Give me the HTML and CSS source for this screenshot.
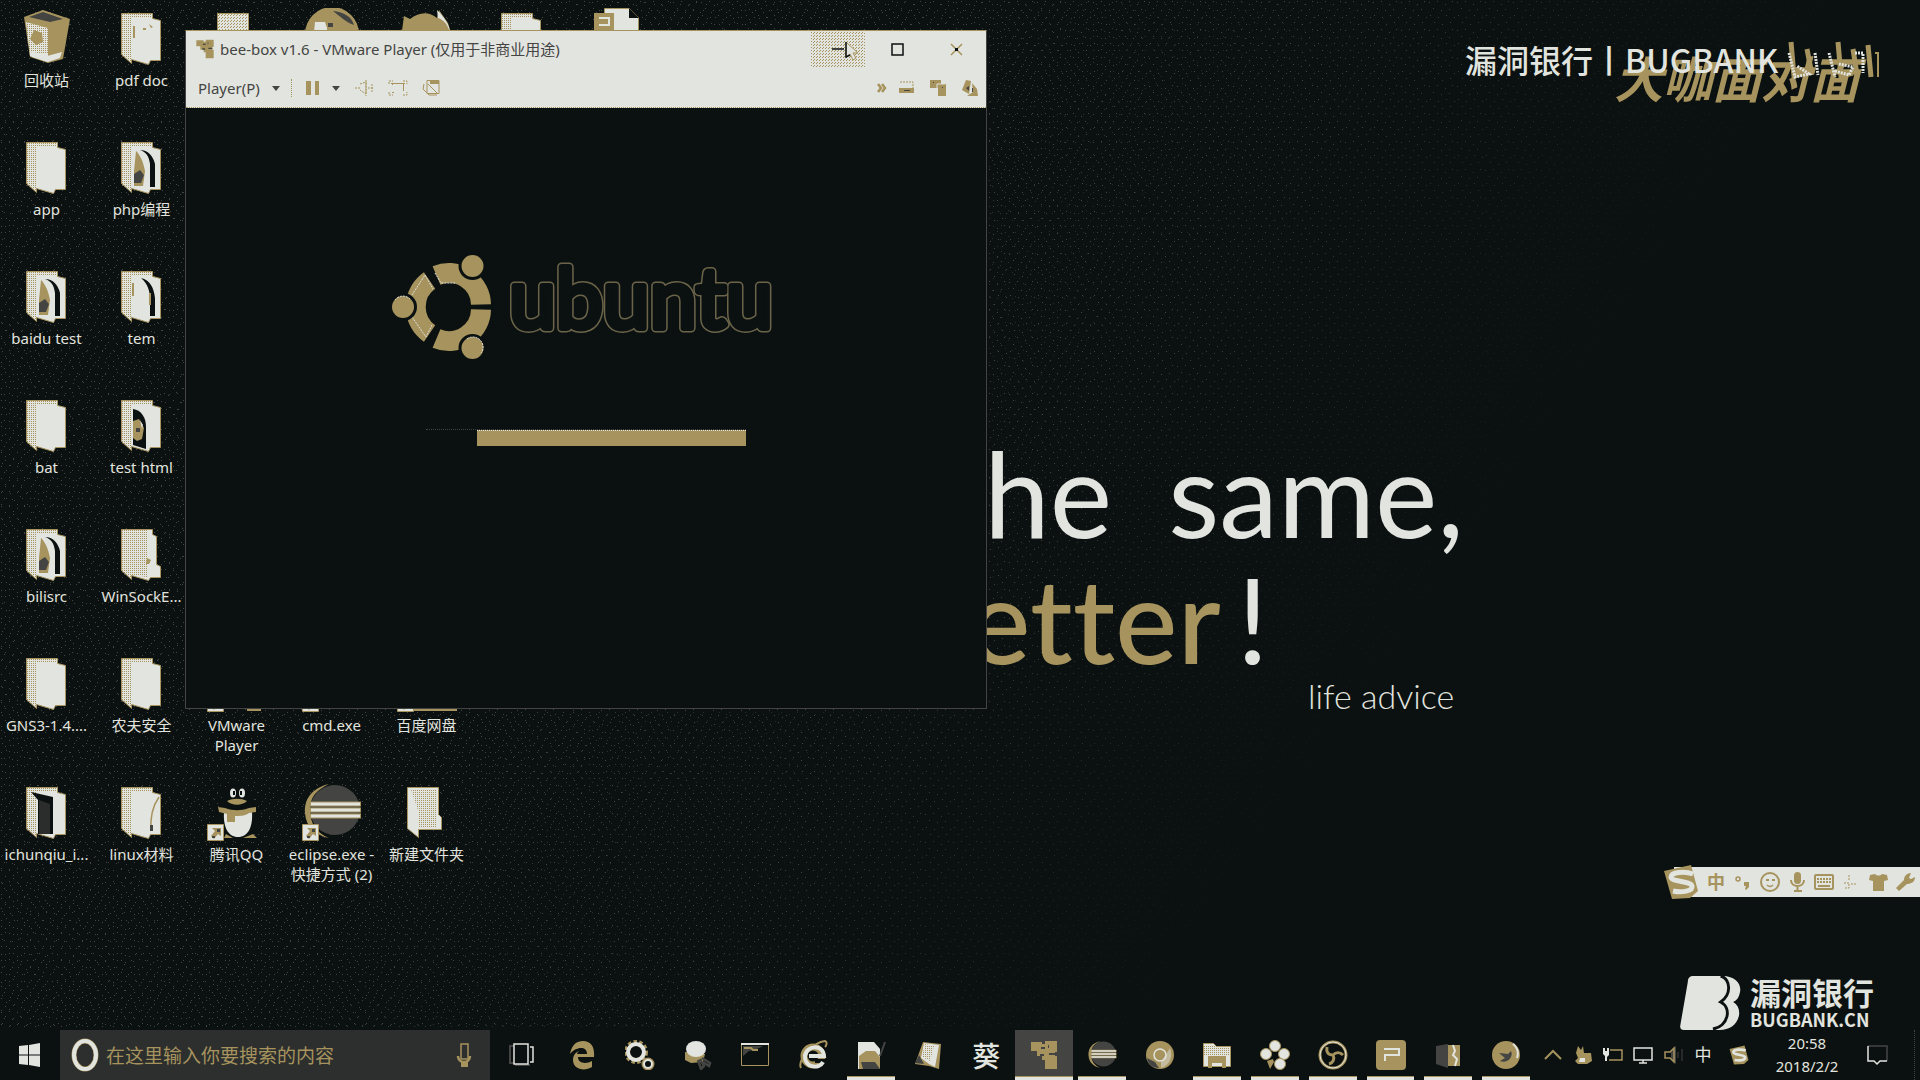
FILE: index.html
```html
<!DOCTYPE html>
<html lang="zh-CN">
<head>
<meta charset="utf-8">
<title>Desktop</title>
<link rel="stylesheet" href="styles.css">
</head>
<body>
<svg class="defs" aria-hidden="true">
  <defs>
    <pattern id="check" width="2" height="2" patternUnits="userSpaceOnUse"><path class="gold" d="M0 0h1v1H0z"/></pattern>
    <pattern id="check3" width="3" height="3" patternUnits="userSpaceOnUse"><path class="gold" d="M0 0h1v1H0zM2 1h1v1H2z"/></pattern>
    <symbol id="folder" viewBox="0 0 60 60">
      <path class="cream edge" d="M9.500 5.500h31v5l8 2v40h-10l-2 4-17-5v4l-10-9z"/>
      <path fill="url(#check)" d="M10 6h10v50l-10-8zM20 6h20v4H20z"/>
    </symbol>
    <symbol id="folder-photo" viewBox="0 0 60 60">
      <use href="#folder"/>
      <path class="ink" d="M28 13c8 0 13 6 15 14v23h-5V27c-1-8-4-12-10-14z"/>
      <path class="gold" d="M24 14c4 4 7 10 9 20l-2 15h-9V34z"/>
      <path class="gray" d="M22 37l6-4 4 5-3 8h-7z"/>
    </symbol>
    <symbol id="folder-pale" viewBox="0 0 60 60">
      <use href="#folder"/>
      <path class="ink" d="M29 12c9 2 13 10 14 20v18h-5V34c0-9-2-16-9-22z"/>
      <path class="gold" d="M20 17h2v13h-2zM37 27h2v12h-2z"/>
    </symbol>
    <symbol id="folder-dense" viewBox="0 0 60 60">
      <path class="cream edge" d="M9.500 5.500h31v5l4 2v28l4 2v11h-10l-2 3-17-5v4l-10-9z"/>
      <path fill="url(#check)" d="M10 6h25v47l-15-2v4l-10-7z"/>
      <path class="gold" d="M35 34l4 2-2 4h-3z"/>
    </symbol>
    <symbol id="arrow" viewBox="0 0 60 60">
      <path class="cream edge" d="M.5 42.500h16v16H.5z"/>
      <path class="gold" d="M5 46h9v8l-3-2-4 5-3-3 4-5z"/>
      <path class="gray" d="M10 47h3v3h-3zM5 54h3v2H5z"/>
    </symbol>
    <symbol id="sogou" viewBox="0 0 36 36">
      <path class="gold" d="M1 7L28 1l7 26-8 7-18 1z"/>
      <path class="s-cream" stroke-width="5" d="M30 10C22 7 8 8 8 13s20 4 21 9-10 7-19 5"/>
    </symbol>
    <symbol id="eclipse" viewBox="0 0 60 60">
      <circle class="gray" cx="33" cy="28" r="25"/>
      <path class="gold" d="M27 2C10 6 2 17 3 31s10 22 24 25C15 51 8 42 8 28S15 8 27 2z"/>
      <path class="s-gold" stroke-width="5" d="M8 22h51M8 28h51M8 34h51"/>
      <path class="s-cream" stroke-width="3" d="M9 22h49M9 28h49M9 34h49"/>
    </symbol>
    <symbol id="vmware" viewBox="0 0 28 30">
      <path class="gold" d="M1 2h11v2h3V1h12v11h-2v4h2v13H15v-9h-3v-4H7v-5H1z"/>
      <path class="gray" d="M11 7h4v2h-4zM10 14h4v2h-4zM19 13h6v2h-6zM18 5h1v3h-1z"/>
    </symbol>
  </defs>
</svg>

<div class="screen">
  <main class="desktop">
    <svg class="grain" width="100%" height="100%" aria-hidden="true">
      <defs>
        <pattern id="dots-a" width="28" height="28" patternUnits="userSpaceOnUse"><path class="gray" d="M1 2h1v1h-1zM9 1h1v1h-1zM17 4h1v1h-1zM24 1h1v1h-1zM5 8h1v1h-1zM13 10h1v1h-1zM21 9h1v1h-1zM2 15h1v1h-1zM10 17h1v1h-1zM18 15h1v1h-1zM26 17h1v1h-1zM6 22h1v1h-1zM14 24h1v1h-1zM22 22h1v1h-1z"/></pattern>
        <pattern id="dots-b" width="26" height="26" patternUnits="userSpaceOnUse"><path class="gray" d="M4 4h1v1h-1zM12 5h1v1h-1zM20 2h1v1h-1zM1 10h1v1h-1zM9 12h1v1h-1zM17 10h1v1h-1zM24 12h1v1h-1zM5 18h1v1h-1zM13 17h1v1h-1zM21 19h1v1h-1zM1 24h1v1h-1zM9 23h1v1h-1zM17 24h1v1h-1z"/></pattern>
        <linearGradient id="fade-far" gradientUnits="userSpaceOnUse" x1="0" y1="0" x2="1291" y2="878"><stop offset=".72" stop-color="#fff"/><stop offset="1" stop-color="#000"/></linearGradient>
        <linearGradient id="fade-near" gradientUnits="userSpaceOnUse" x1="0" y1="0" x2="1291" y2="878"><stop offset=".5" stop-color="#fff"/><stop offset=".8" stop-color="#000"/></linearGradient>
        <mask id="far"><rect width="100%" height="100%" fill="url(#fade-far)"/></mask>
        <mask id="near"><rect width="100%" height="100%" fill="url(#fade-near)"/></mask>
      </defs>
      <rect width="100%" height="100%" fill="url(#dots-a)" mask="url(#far)"/>
      <rect width="100%" height="100%" fill="url(#dots-b)" mask="url(#near)"/>
    </svg>

    <div class="wallpaper">
      <p class="line line-one"><span>he</span><span>same,</span></p>
      <p class="line line-two"><span class="accent">etter</span><span>!</span></p>
      <p class="advice">life advice</p>
    </div>

    <ul class="shortcuts">
      <li><svg viewBox="0 0 60 60"><path class="gold" d="M7 9L26 2l27 9-7 40-15 4-18-6z"/><path class="gray" d="M12 9l14-5 20 7-13 3z"/><path class="cream" d="M9 14l22 6v34l-18-6z"/><path fill="url(#check)" d="M8 13l24 6v26H12z"/><path class="gold" d="M17 22l8 3 1 9-7 3-6-6z"/><path class="cream" d="M14 43l16 5 15-4-2 6-12 4-16-5z"/></svg><span>回收站</span></li>
      <li><svg><use href="#folder"/></svg><span>app</span></li>
      <li><svg><use href="#folder-photo"/></svg><span>baidu test</span></li>
      <li><svg><use href="#folder"/></svg><span>bat</span></li>
      <li><svg><use href="#folder-photo"/></svg><span>bilisrc</span></li>
      <li><svg><use href="#folder"/></svg><span>GNS3-1.4....</span></li>
      <li><svg viewBox="0 0 60 60"><use href="#folder"/><path class="ink" d="M14 10l22 5v37H21V18z"/><path fill="#2a2d2c" d="M22 18l11 4v30H22z"/></svg><span>ichunqiu_i...</span></li>

      <li><svg viewBox="0 0 60 60"><use href="#folder"/><path class="gold" d="M21 18h2v12h-2zM31 20h3v2h-3zM37 16l4 3-2 1z"/></svg><span>pdf doc</span></li>
      <li><svg><use href="#folder-photo"/></svg><span>php编程</span></li>
      <li><svg><use href="#folder-pale"/></svg><span>tem</span></li>
      <li><svg viewBox="0 0 60 60"><use href="#folder"/><path class="ink" d="M21 14c8 1 13 8 13 18v22l-13-4z"/><path class="gold" d="M21 26l6-2 5 9-2 11-5 2-4-3z"/><path class="cream" d="M28 25l3 5-1 4z"/><path class="gray" d="M24 33h4v4h-4z"/></svg><span>test html</span></li>
      <li><svg><use href="#folder-dense"/></svg><span>WinSockE...</span></li>
      <li><svg><use href="#folder"/></svg><span>农夫安全</span></li>
      <li><svg viewBox="0 0 60 60"><use href="#folder"/><path class="s-gold" stroke-width="1.500" d="M47 15c-7 10-9 20-8 34"/><path class="gray" d="M38 43h3v6h-3z"/></svg><span>linux材料</span></li>

      <li class="r1 c3"><svg viewBox="0 0 60 60"><path class="cream edge" d="M10.500 5.500h31v50h-31z"/><path fill="url(#check3)" d="M11 6h30v40H11z"/></svg></li>
      <li class="r6 c3"><svg viewBox="0 0 60 60"><path class="gold" d="M40 30h14v28H40z"/><use href="#arrow"/></svg><span>VMware Player</span></li>
      <li class="r7 c3"><svg viewBox="0 0 60 60"><path class="ink" d="M30 0c13 0 15 11 15 19l6 13 3 15-4-1-6 8H16L6 40l9-21C15 11 17 0 30 0z"/><ellipse class="cream" cx="26" cy="11" rx="3" ry="4.500"/><ellipse class="cream" cx="35" cy="11" rx="3" ry="4.500"/><path class="ink" d="M26 9h2v4h-2zM33 9h2v4h-2z"/><path class="gold" d="M20 19c6-3 14-3 20 0-5 5-15 5-20 0z"/><path class="cream" d="M17 30h28c1 15-4 25-14 25S16 45 17 30z"/><path class="gold" d="M11 25l7 1c8 3 16 3 24 0l7-1v5l-7 1c-4 3-9 3-14 3v6h-8v-8l-8-2zM17 56l2-4 7 4zM36 56l10-4 4 4z"/><use href="#arrow"/></svg><span>腾讯QQ</span></li>

      <li class="r1 c4"><svg viewBox="0 0 60 60"><circle class="gold" cx="30" cy="26" r="27"/><path class="cream" d="M13 14h10l2 6v14H11z"/><path class="gray" d="M31 3c11 1 19 6 21 14-9-3-14-9-21-14zM26 15h5v4h-5z"/></svg></li>
      <li class="r6 c4"><svg viewBox="0 0 60 60"><use href="#arrow"/></svg><span>cmd.exe</span></li>
      <li class="r7 c4"><svg viewBox="0 0 60 60"><use href="#eclipse"/><use href="#arrow"/></svg><span>eclipse.exe - 快捷方式 (2)</span></li>

      <li class="r1 c5"><svg viewBox="0 0 60 60"><path class="gold" d="M4 30L7 8l6 3c9-7 19-8 27-1l2-8 9 13 5 16z"/><path class="cream" d="M40 2c6 6 12 13 13 22-3-8-6-12-12-14z"/></svg></li>
      <li class="r6 c5"><svg viewBox="0 0 60 60"><path class="gold" d="M14 40h46v18H14z"/><use href="#arrow"/></svg><span>百度网盘</span></li>
      <li class="r7 c5"><svg viewBox="0 0 60 60"><path class="cream edge" d="M10.500 5.500h31v27l3 3v12h-23v8l-11-9z"/><path fill="url(#check)" d="M14 8h26v38H21V28z"/></svg><span>新建文件夹</span></li>

      <li class="r1 c6"><svg><use href="#folder"/></svg></li>
      <li class="r1 c7"><svg viewBox="0 0 60 60"><path class="cream edge" d="M17.500.5h25l9 9v30h-34z"/><path class="ink" d="M42 0v10h10z"/><path class="gold" d="M7 5h20v20H7z"/><path class="s-cream" stroke-width="2" d="M12 10h10v7H12"/></svg></li>
    </ul>

    <section class="window" aria-label="VMware Player">
      <header class="chrome">
        <div class="titlebar">
          <svg class="app-icon" viewBox="0 0 28 30"><use href="#vmware"/></svg>
          <h1>bee-box v1.6 - VMware Player (仅用于非商业用途)</h1>
          <div class="controls">
            <button class="hover" aria-label="Minimize"><svg viewBox="0 0 54 36"><path fill="url(#check3)" d="M0 0h54v36H0z"/><path class="s-ink" stroke-width="1.500" d="M21 17h12"/></svg></button>
            <button aria-label="Maximize"><svg viewBox="0 0 54 36"><path class="s-ink" stroke-width="1.500" d="M22 12h11v11H22z"/></svg></button>
            <button aria-label="Close"><svg viewBox="0 0 54 36"><path class="s-gold" stroke-width="1.500" d="M22 12l11 11M33 12L22 23"/><path class="ink" d="M26 16h3v3h-3z"/></svg></button>
          </div>
        </div>
        <div class="toolbar">
          <button class="menu">Player(P)<i class="caret"></i></button>
          <i class="rule"></i>
          <button class="pause" aria-label="Suspend"><svg viewBox="0 0 14 14"><path class="gold" d="M0 0h5v14H0zM9 0h4v14H9z"/></svg><i class="caret"></i></button>
          <button aria-label="Send keys"><svg viewBox="0 0 20 18"><path class="s-gold dashed" d="M1 9h5M6 5l6-2v12l-6-4M12 1v16M14 9h5M18 5v8"/></svg></button>
          <button aria-label="Full screen"><svg viewBox="0 0 20 18"><path class="s-gold dashed" d="M1 5V2h4M15 2h4v3M1 13v3h4M15 16h4v-3"/><path class="s-gold" d="M3 4.500h14M4.500 4v2M15.500 4v8M4 13.500h2"/></svg></button>
          <button aria-label="Unity"><svg viewBox="0 0 20 18"><path class="s-gold" d="M5 1.500h12v13H5zM2 5l-1 5 6 6h8M6 5l9 9"/><path class="gold" d="M8 1h9v4H8z"/></svg></button>
          <div class="devices">
            <button class="more" aria-label="More"><svg viewBox="0 0 10 10"><path class="s-gold" stroke-width="2.500" d="M1 1l3 4-3 4M5 1l3 4-3 4"/></svg></button>
            <button aria-label="Hard disk"><svg viewBox="0 0 20 18"><path class="s-gold dashed" d="M2 3h13v7"/><path class="gold" d="M1 9h15v5H1z"/><path class="gray" d="M6 11h6v1H6z"/></svg></button>
            <button aria-label="Network"><svg viewBox="0 0 20 18"><path class="gold" d="M1 1h11v4h5v12H9V9H1z"/><path class="s-cream" d="M8 13V5h8"/><path class="gray" d="M4 3h1v1H4zM13 8h1v1h-1z"/></svg></button>
            <button aria-label="Printer"><svg viewBox="0 0 20 18"><path class="gold" d="M6 1l5 1-2 13-7-4zM12 4l5 6 1 7H7l6-4z"/><path class="gray" d="M6 9l3-2v5zM12 9h1v4h-1z"/></svg></button>
          </div>
        </div>
      </header>
      <div class="guest">
        <svg class="ubuntu" viewBox="0 0 390 112" role="img" aria-label="ubuntu">
          <g fill="none" class="ring" stroke-width="20">
            <path d="M38.600 27.600A32 32 0 0 0 38.600 80.400"/>
            <path d="M45.500 22.500A32 32 0 0 1 90 51.500"/>
            <path d="M90 56.500A32 32 0 0 1 45.500 85.500"/>
          </g>
          <path class="s-cream dashed" d="M21 42l13-20 8 14M21 64l14 20 6-12M44 20l6 10h14"/>
          <g class="gold knob"><circle cx="12" cy="54" r="12.500"/><circle cx="81.500" cy="13" r="12.500"/><circle cx="81.500" cy="95" r="12.500"/></g>
          <path class="s-cream dashed" d="M4 47a10 10 0 0 1 15-1M76 86a10 10 0 0 1 14 14"/>
          <text class="word outer" x="118" y="75">ubuntu</text>
          <text class="word inner" x="118" y="75">ubuntu</text>
        </svg>
        <div class="boot" role="progressbar" aria-label="Booting"><span></span></div>
      </div>
    </section>
    <svg class="pointer" viewBox="0 0 14 20" aria-hidden="true"><path class="cream edge" d="M1 1v15l4-3 3 6 3-2-3-5h5z"/><path class="s-ink" stroke-width="1.500" d="M1 1v15l4-2"/></svg>

    <div class="live">
      <p class="show">大咖面对面</p>
      <p class="bank">漏洞银行丨BUGBANK</p>
      <svg class="bili" viewBox="0 0 96 46" aria-hidden="true"><path class="s-gold" stroke-width="5" d="M6 3l3 34 14-4M22 10l5 26M53 3l3 34 12-3M68 10l4 26M83 6l3 32"/><path class="s-gold" stroke-width="2" d="M90 14h3v24"/><path class="s-cream dashed" stroke-width="3" d="M4 14l6 24 14-3-12-8M30 14l3 22M44 14l6 24M50 32l14 4 4-8-14-3M70 14h8v20"/></svg>
    </div>

    <div class="ime">
      <svg class="ime-logo" viewBox="0 0 36 36"><use href="#sogou"/></svg>
      <button>中</button>
      <button aria-label="Punctuation"><svg viewBox="0 0 20 20"><circle class="s-gold" stroke-width="1.500" cx="5" cy="7" r="2"/><path class="gold" d="M11 10h5v5l-3 3-1-1 1-3h-2z"/></svg></button>
      <button aria-label="Emoji"><svg viewBox="0 0 20 20"><circle class="s-gold" stroke-width="2" cx="10" cy="10" r="9"/><path class="gold" d="M6 7h3v2H6zM12 7h3v2h-3z"/><path class="s-gold" stroke-width="1.500" d="M7 13c2 2 4 2 6 0"/></svg></button>
      <button aria-label="Voice"><svg viewBox="0 0 20 20"><rect class="gold" x="7" y="0" width="7" height="12" rx="3.500"/><path class="s-gold" stroke-width="2" d="M4 8c0 8 13 8 13 0M10.500 14v5M7 19h8"/></svg></button>
      <button aria-label="Keyboard"><svg viewBox="0 0 20 20"><rect class="s-gold" stroke-width="2" x="1" y="3" width="18" height="14" rx="1"/><path class="s-gold dashed" stroke-width="2" d="M3 7h14M3 10h14"/><path class="gold" d="M4 13h12v2H4z"/></svg></button>
      <button aria-label="Tools"><svg viewBox="0 0 20 20"><path class="s-gold dashed" d="M8 3v5M3 11h5v5H3M10 12h5"/></svg></button>
      <button aria-label="Skin"><svg viewBox="0 0 20 20"><path class="gold" d="M2 3l5-1c2 2 5 2 7 0l5 1 1 5-4 1v10H5V9L1 8z"/></svg></button>
      <button aria-label="Settings"><svg viewBox="0 0 20 20"><path class="gold" d="M1 16l8-8c0-4 3-7 7-7l-2 5 2 1 4-2c0 5-4 7-8 7l-8 7z"/></svg></button>
    </div>

    <div class="brand">
      <svg viewBox="0 0 64 56" aria-hidden="true"><path class="cream" d="M14 0h30c14 0 20 9 18 17-1 5-3 8-7 10 5 3 7 8 6 14-2 10-10 15-20 15H4c-3 0-4-2-4-4L8 6c0-4 2-6 6-6z"/><path class="s-ink" stroke-width="3" d="M42 0c10 3 12 19 0 27 12 6 8 25-8 28"/></svg>
      <p><strong>漏洞银行</strong><b>BUGBANK.CN</b></p>
    </div>
  </main>

  <footer class="taskbar">
    <button class="start" aria-label="Start"><svg viewBox="0 0 22 24"><path class="cream" d="M0 3l9-1v9.500H0zM10 2l11-2v11.500H10zM0 12.500h9V22l-9-1zM10 12.500h11V24l-11-2z"/></svg></button>
    <label class="search">
      <svg class="cortana" viewBox="0 0 28 34"><ellipse class="s-gold" stroke-width="5" cx="14" cy="17" rx="11" ry="14"/><ellipse class="s-cream" stroke-width="4" cx="14" cy="17" rx="11" ry="14"/></svg>
      <input type="text" placeholder="在这里输入你要搜索的内容" aria-label="在这里输入你要搜索的内容">
      <svg class="mic" viewBox="0 0 16 26"><path class="s-gold" stroke-width="1.500" d="M5 2h7v15H5z"/><path class="s-gold" stroke-width="2.500" d="M2 14c0 8 12 8 12 0"/><path class="gold" d="M5 19h7v6H5z"/></svg>
    </label>
    <button class="taskview" aria-label="Task view"><svg viewBox="0 0 26 26"><path class="s-gray" stroke-width="2" d="M5 4H1v17h4M6 23h15"/><path class="s-cream" stroke-width="1.500" d="M5 2h14v20H5zM21 5h3v15h-3"/></svg></button>
    <nav class="apps">
      <button aria-label="Edge"><svg viewBox="0 0 30 30"><path class="gold" d="M3 14C5 4 10 1 16 1c8 0 12 6 11 16H11c0 7 9 7 14 4v6c-8 5-19 2-19-7 0-5 3-8 6-9-1 1-2 2-2 3h10c0-9-12-7-17 0z"/></svg></button>
      <button aria-label="Settings"><svg viewBox="0 0 30 30"><circle class="s-gold" stroke-width="6" stroke-dasharray="3 2" cx="11" cy="12" r="9"/><circle class="s-cream" stroke-width="4" cx="11" cy="12" r="8"/><circle class="s-gold" stroke-width="3" cx="23" cy="24" r="5"/><circle class="s-cream" stroke-width="2" cx="23" cy="24" r="4"/></svg></button>
      <button aria-label="Snip"><svg viewBox="0 0 30 30"><path class="gold" d="M3 12l20 2-2 8-12 1-6-3z"/><ellipse class="cream" cx="14" cy="9" rx="10" ry="8"/><path class="s-gray" stroke-width="2.500" d="M16 20l3 9 3-3-4-7M20 18l8 5-1 3-6-4"/></svg></button>
      <button aria-label="Command prompt"><svg viewBox="0 0 30 30"><path class="s-gold" d="M1.500 3.500h27v22h-27z"/><path class="cream" d="M1 3h28v2H1z"/><path class="gray" d="M3 6h20l-8 4-6 1-6 5z"/><path class="s-gold" stroke-width="2" d="M4 8h7l2 2h5"/></svg></button>
      <button aria-label="Internet Explorer"><svg viewBox="0 0 30 30"><circle class="s-gold" stroke-width="7" cx="15" cy="16" r="9"/><path class="s-gold" stroke-width="2" d="M3 28C-1 20 16 2 27 1c3 1 1 5 0 6"/><path class="ink" d="M17 19h13v4H17z"/><path class="s-cream" stroke-width="4" d="M25 22c-4 8-19 5-18-6 1-11 18-12 19 0H11"/></svg></button>
      <button class="open" aria-label="Notes"><svg viewBox="0 0 30 30"><path class="cream" d="M2 2h16l6 7v20H2z"/><path class="gold" d="M3 16l7-5h9l5 6v12H3z"/><path class="gray" d="M5 22h14l5 7H7z"/><path class="s-gray" stroke-width="2" d="M29 2l-5 14"/></svg></button>
      <button aria-label="Notepad"><svg viewBox="0 0 30 30"><path class="gold" d="M10 2l18 2-2 25-10-3-14-2z"/><path class="cream" d="M11 3l15 2-4 22-6-3-8-6z"/><path fill="url(#check)" d="M12 4l9 2-4 15-8-4z"/><path class="gray" d="M6 15l5 9-9-1z"/></svg></button>
      <button class="glyph">葵</button>
      <button class="active" aria-label="VMware Player"><svg viewBox="0 0 28 30"><use href="#vmware"/></svg></button>
      <button class="open" aria-label="Eclipse"><svg viewBox="0 0 60 60"><use href="#eclipse"/></svg></button>
      <button aria-label="Chrome"><svg viewBox="0 0 30 30"><circle class="gold" cx="15" cy="15" r="14"/><circle class="s-cream" stroke-width="1.500" cx="15" cy="15" r="6"/><path class="cream" d="M16 22l9-14c3 9 0 17-9 20z" opacity=".5"/><path class="gray" d="M2 18l8 4 4 6C7 28 3 24 2 18z"/></svg></button>
      <button class="open" aria-label="Explorer"><svg viewBox="0 0 30 30"><path class="cream edge" d="M1.500 3.500h10l3 3h14v20h-27z"/><path fill="url(#check)" d="M2 5h26v11H2z"/><path class="gold" d="M6 16h18v12h-4v-5H10v5H6z"/></svg></button>
      <button class="open" aria-label="Flower"><svg viewBox="0 0 30 30"><g class="cream edge"><circle cx="15" cy="6" r="5.500"/><circle cx="6" cy="14" r="5.500"/><circle cx="24" cy="14" r="5.500"/><circle cx="20" cy="24" r="5.500"/></g><path class="gold" d="M7 21l6-2 1 3-4 7z"/></svg></button>
      <button class="open" aria-label="OBS"><svg viewBox="0 0 30 30"><circle class="s-gold" stroke-width="3" cx="15" cy="15" r="13"/><circle class="s-cream" stroke-width="1" cx="15" cy="15" r="13"/><circle class="ink" cx="15" cy="15" r="11"/><path class="s-gold" stroke-width="3" d="M15 15c-5 0-7-3-6-8M15 15c3-3 7-3 10 0M15 15c2 4 0 8-4 9"/></svg></button>
      <button class="open" aria-label="Presentation"><svg viewBox="0 0 30 30"><rect class="gold" width="30" height="30" rx="4"/><path class="s-cream" stroke-width="2" d="M8 9h15v6H9v6"/></svg></button>
      <button class="open" aria-label="Book"><svg viewBox="0 0 30 30"><path class="gray" d="M3 6l12-2v24L3 24z"/><path class="gold" d="M15 5h12v21H15z"/><path class="s-cream" stroke-width="2" d="M20 5l2 6-2 4 4 4-2 7"/></svg></button>
      <button class="open" aria-label="Firefox"><svg viewBox="0 0 30 30"><circle class="gold" cx="15" cy="15" r="14"/><path class="gray" d="M8 13l9 1 3-3c3 6-4 13-11 10l5-3z"/><path class="s-cream" stroke-width="2" d="M22 4c5 4 6 8 4 14"/></svg></button>
    </nav>
    <div class="tray">
      <button aria-label="Show hidden icons"><svg viewBox="0 0 20 20"><path class="s-gold" stroke-width="2" d="M2 14l8-8 8 8"/></svg></button>
      <button aria-label="Fox"><svg viewBox="0 0 20 20"><path class="gold" d="M5 1l3 4 2-4 1 7h7l1 8-5 3H5l-3-3 3-3-2-5z"/><path class="cream" d="M7 13h5v4H6z"/></svg></button>
      <button aria-label="Battery"><svg viewBox="0 0 20 20"><path class="s-gold" stroke-width="1.500" d="M7 5h12v10H6"/><path class="cream" d="M0 3h2v3h2V3h2v7l-2 2v4H2v-5l-2-2z"/></svg></button>
      <button aria-label="Network"><svg viewBox="0 0 20 20"><path class="s-cream" stroke-width="1.500" d="M1 3h18v12H1zM10 15v3M6 18h8"/></svg></button>
      <button aria-label="Volume"><svg viewBox="0 0 20 20"><path class="gray" d="M8 6l5-5v18l-5-5z"/><path class="s-gold" stroke-width="1.500" d="M7 7H2v6h5l4 4V3z"/><path class="s-gray" stroke-width="1" d="M15 7v6M19 4v12"/></svg></button>
      <button class="lang">中</button>
      <button class="sg" aria-label="Sogou"><svg viewBox="0 0 36 36"><use href="#sogou"/></svg></button>
      <div class="clock"><time>20:58</time><time>2018/2/2</time></div>
      <button class="notice" aria-label="Notifications"><svg viewBox="0 0 22 22"><path class="s-gray" stroke-width="1.500" d="M1 2h19v15"/><path class="s-cream" stroke-width="1.500" d="M1 2v15h6l3 3 3-3h7"/></svg></button>
      <button class="peek" aria-label="Show desktop"></button>
    </div>
  </footer>
</div>
</body>
</html>
```
FILE: styles.css
```css
:root {
  --ink: #0b1111;
  --cream: #e2e4df;
  --gold: #a6935d;
  --gray: #444543;
}

* { box-sizing: border-box; }

body {
  margin: 0;
  background: var(--ink);
  color: var(--cream);
  font: 15px/20px "Noto Sans", "Noto Sans CJK SC", sans-serif;
}

p, h1, ul { margin: 0; padding: 0; }
h1 { font-size: 15px; font-weight: 400; }
ul { list-style: none; }

button {
  display: flex;
  align-items: center;
  justify-content: center;
  padding: 0;
  border: 0;
  background: none;
  color: inherit;
  font: inherit;
}

svg { display: block; flex: none; }
.defs { position: absolute; width: 0; height: 0; }

/* palette helpers for drawings */
.ink { fill: var(--ink); }
.cream { fill: var(--cream); }
.gold { fill: var(--gold); }
.gray { fill: var(--gray); }
.edge { stroke: var(--gold); stroke-width: 1; }
.s-ink { fill: none; stroke: var(--ink); }
.s-cream { fill: none; stroke: var(--cream); }
.s-gold { fill: none; stroke: var(--gold); }
.s-gray { fill: none; stroke: var(--gray); }
.dashed { stroke-dasharray: 2 1; }

.screen {
  display: flex;
  flex-direction: column;
  min-height: 100vh;
}

.desktop {
  position: relative;
  flex: 1;
  overflow: hidden;
}

.grain { position: absolute; inset: 0; }

/* wallpaper lettering */
.wallpaper {
  position: absolute;
  left: 968px;
  top: 430px;
  font-family: Lato, sans-serif;
  font-variant-ligatures: none;
}
.line {
  display: flex;
  font-size: 118px;
  line-height: 126px;
}
.line-one { gap: 56px; padding-left: 16px; }
.line-two { gap: 16px; }
.accent { color: var(--gold); font-weight: 500; }
.advice {
  padding-left: 340px;
  font-size: 34px;
  line-height: 28px;
  font-weight: 300;
}

/* desktop icons */
.shortcuts {
  position: relative;
  display: grid;
  grid-template-columns: repeat(7, 95px);
  grid-template-rows: repeat(7, 129px);
  grid-auto-flow: column;
  width: max-content;
  margin-left: -1px;
}
.shortcuts li {
  display: flex;
  flex-direction: column;
  align-items: center;
  gap: 2px;
  padding-top: 8px;
  text-align: center;
}
.shortcuts svg { width: 60px; height: 60px; }
.r1 { grid-row: 1; }
.r6 { grid-row: 6; }
.r7 { grid-row: 7; }
.c3 { grid-column: 3; }
.c4 { grid-column: 4; }
.c5 { grid-column: 5; }
.c6 { grid-column: 6; }
.c7 { grid-column: 7; }

/* player window */
.window {
  position: absolute;
  left: 185px;
  top: 30px;
  width: 802px;
  height: 679px;
  display: flex;
  flex-direction: column;
  border: 1px solid var(--gray);
  border-top-color: var(--gold);
  background: var(--ink);
}
.chrome {
  background: var(--cream);
  color: var(--gray);
  border-bottom: 1px dotted var(--gold);
}
.titlebar {
  display: flex;
  align-items: flex-start;
  height: 38px;
  padding-left: 9px;
}
.titlebar h1 { margin-left: 5px; line-height: 36px; }
.app-icon { width: 20px; height: 20px; margin-top: 8px; }
.controls { display: flex; gap: 5px; margin-left: auto; padding: 1px 3px 0 0; }
.controls svg { width: 54px; height: 36px; }
.toolbar {
  display: flex;
  align-items: center;
  gap: 14px;
  height: 38px;
  padding: 0 6px 0 12px;
}
.toolbar svg { width: 20px; height: 18px; }
.toolbar .pause svg { width: 14px; height: 14px; }
.toolbar .more svg { width: 10px; height: 10px; }
.menu, .pause { gap: 12px; }
.caret {
  border: 4px solid transparent;
  border-top: 5px solid var(--gray);
  border-bottom: 0;
}
.rule { height: 18px; margin-left: -3px; border-left: 1px dotted var(--gold); }
.devices { display: flex; align-items: center; gap: 11px; margin-left: auto; }
.guest {
  flex: 1;
  display: flex;
  flex-direction: column;
  align-items: center;
  gap: 64px;
  padding-top: 145px;
}
.ubuntu { width: 390px; height: 112px; }
.ring { stroke: var(--gold); }
.knob { stroke: var(--ink); stroke-width: 3; }
.word {
  font: 84px Lato, sans-serif;
  stroke-linejoin: round;
}
.outer { fill: var(--gold); stroke: #6b6449; stroke-width: 9; }
.inner { fill: var(--ink); stroke: var(--ink); stroke-width: 6; }
.boot {
  display: flex;
  width: 320px;
  height: 17px;
  padding-left: 51px;
  border-top: 1px dotted var(--gray);
}
.boot span { flex: 1; border-top: 1px dotted var(--cream); background: var(--gold); }
.pointer { position: absolute; left: 845px; top: 41px; width: 14px; height: 20px; }

/* stream overlays */
.live {
  position: absolute;
  right: 39px;
  top: 35px;
  display: grid;
  width: 416px;
  font-family: "Noto Sans CJK SC", sans-serif;
}
.live > * { grid-area: 1 / 1; }
.show {
  justify-self: end;
  padding: 16px 22px 0 0;
  color: var(--gold);
  font-size: 49px;
  line-height: 52px;
  font-style: italic;
  font-weight: 700;
}
.bank { font-size: 32px; line-height: 48px; font-weight: 500; }
.bili { justify-self: end; width: 96px; height: 46px; margin-top: 4px; }

.ime {
  position: absolute;
  right: 0;
  bottom: 133px;
  display: flex;
  align-items: center;
  gap: 7px;
  height: 30px;
  padding-right: 5px;
  background: var(--cream);
  color: var(--gold);
}
.ime button { width: 20px; height: 20px; font-weight: 700; font-size: 18px; }
.ime svg { width: 20px; height: 20px; }
.ime .ime-logo { width: 36px; height: 36px; margin-left: -11px; }

.brand {
  position: absolute;
  right: 46px;
  bottom: 0;
  display: flex;
  gap: 8px;
  align-items: flex-end;
}
.brand svg { width: 62px; height: 54px; }
.brand p { display: grid; font-family: "Noto Sans CJK SC", sans-serif; }
.brand strong { font-size: 31px; line-height: 32px; }
.brand b { font-size: 18px; line-height: 22px; }

/* taskbar */
.taskbar {
  display: flex;
  height: 50px;
  background: var(--ink);
}
.start { width: 60px; }
.start svg { width: 22px; height: 24px; }
.search {
  display: flex;
  align-items: center;
  gap: 7px;
  width: 430px;
  padding: 0 18px 0 11px;
  background: #2c2f2e;
}
.search input {
  flex: 1;
  min-width: 0;
  padding: 0;
  border: 0;
  background: none;
  color: var(--gold);
  font: 19px/24px "Noto Sans CJK SC", sans-serif;
}
.search input::placeholder { color: var(--gold); opacity: 1; }
.cortana { width: 28px; height: 34px; }
.mic { width: 16px; height: 26px; }
.taskview { width: 63px; }
.taskview svg { width: 26px; height: 26px; }
.apps { flex: 1; display: grid; grid-template-columns: repeat(17, 1fr); }
.apps button { position: relative; }
.apps svg { width: 30px; height: 30px; }
.apps .glyph { font: 500 28px/50px "Noto Sans CJK SC", sans-serif; }
.apps .active { background: var(--gray); }
.open::after, .active::after {
  content: "";
  position: absolute;
  left: 5px;
  right: 5px;
  bottom: 0;
  height: 3px;
  border-top: 1px solid var(--gold);
  background: var(--cream);
}
.active::after { left: 0; right: 0; }
.tray { display: flex; width: 385px; padding-left: 3px; }
.tray button { width: 30px; }
.tray svg { width: 20px; height: 20px; }
.tray .lang { font-size: 17px; }
.tray .sg { width: 42px; }
.clock {
  display: grid;
  align-content: center;
  width: 94px;
  line-height: 23px;
  text-align: center;
}
.tray .notice { width: 48px; }
.tray .notice svg { width: 22px; height: 22px; }
.tray .peek { width: 13px; border-right: 1px dotted var(--gray); }
```
